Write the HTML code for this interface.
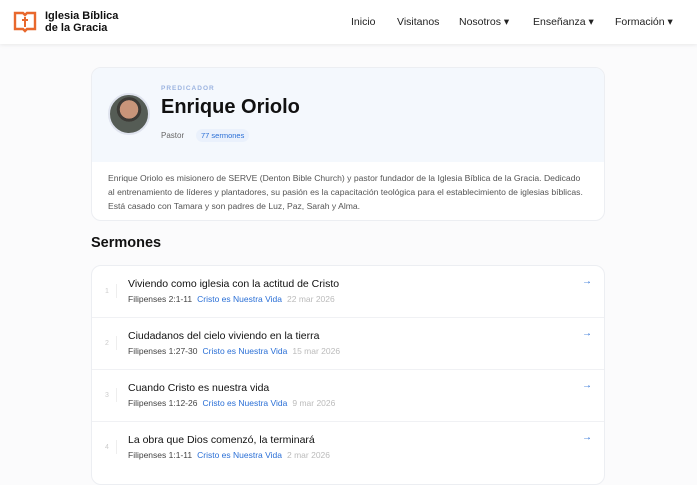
<!DOCTYPE html><html><head><meta charset="utf-8"><style>
*{margin:0;padding:0;box-sizing:border-box}
body{width:697px;height:469px;overflow:hidden;background:#fbfbfc;font-family:"Liberation Sans",sans-serif;color:#111;position:relative}
.hdr{position:absolute;left:0;top:0;width:697px;height:44px;background:#fff;box-shadow:0 1px 4px rgba(0,0,0,.08)}
.logo{position:absolute;left:45px;top:11px;font-size:11px;font-weight:bold;line-height:11.5px}
.nav{position:absolute;top:16px;font-size:10.5px;color:#222}
.card{position:absolute;left:91px;top:67px;width:514px;height:154px;background:#fff;border:1px solid #eceef2;border-radius:10px;overflow:hidden}
.top{height:94px;background:#f4f8fd}
.lst{position:absolute;left:91px;top:265px;width:514px;height:220px;background:#fff;border:1px solid #eceef2;border-radius:10px}
.row{position:absolute;left:0;width:512px;height:52px;border-bottom:1px solid #f0f1f4}
.n{position:absolute;left:13px;top:22px;font-size:7px;color:#ccc}
.bar{position:absolute;left:24px;top:18px;width:1px;height:14px;background:#eee}
.t{position:absolute;left:36px;top:12px;font-size:10.5px;color:#111}
.m{position:absolute;left:36px;top:28px;font-size:8.5px;color:#444;white-space:nowrap}
.m b{font-weight:normal;color:#2a6fd6;margin:0 5px}
.m i{font-style:normal;color:#bbb}
.ar{position:absolute;right:12px;top:10px;font-size:10px;color:#2a6fd6}
</style></head><body>
<div class="hdr">
<svg style="position:absolute;left:13px;top:10px" width="24" height="24" viewBox="0 0 24 24"><path d="M2 3h8l2 2 2-2h8v16h-8l-2 2-2-2H2z" fill="none" stroke="#e8682d" stroke-width="2.4"/><path d="M12 7v10M9 10h6" stroke="#e8682d" stroke-width="2"/></svg>
<div class="logo">Iglesia Bíblica<br>de la Gracia</div>
<div class="nav" style="left:351px">Inicio</div>
<div class="nav" style="left:397px">Visitanos</div>
<div class="nav" style="left:459px">Nosotros ▾</div>
<div class="nav" style="left:533px">Enseñanza ▾</div>
<div class="nav" style="left:615px">Formación ▾</div>
</div>
<div class="card"><div class="top"></div>
<div style="position:absolute;left:16px;top:25px;width:42px;height:42px;border-radius:50%;background:radial-gradient(circle at 50% 38%,#c9957a 0 30%,#3c3a36 31% 40%,#555c55 41% 100%);border:2px solid #dfe3ee"></div>
<div style="position:absolute;left:69px;top:17px;font-size:6.5px;color:#9bb3e0;letter-spacing:1px;font-weight:bold">PREDICADOR</div>
<div style="position:absolute;left:69px;top:28px;font-size:20px;font-weight:bold">Enrique Oriolo</div>
<div style="position:absolute;left:69px;top:63px;font-size:8px;color:#666">Pastor</div>
<div style="position:absolute;left:104px;top:61px;font-size:7.5px;color:#2a6fd6;background:#eaf1fc;padding:2px 5px;border-radius:8px">77 sermones</div>
<div style="position:absolute;left:16px;top:103px;width:480px;font-size:8.6px;color:#555;line-height:14px">Enrique Oriolo es misionero de SERVE (Denton Bible Church) y pastor fundador de la Iglesia Bíblica de la Gracia. Dedicado al entrenamiento de líderes y plantadores, su pasión es la capacitación teológica para el establecimiento de iglesias bíblicas. Está casado con Tamara y son padres de Luz, Paz, Sarah y Alma.</div>
</div>
<div style="position:absolute;left:91px;top:235px;font-size:14.5px;font-weight:bold">Sermones</div>
<div class="lst">
<div class="row" style="top:0"><span class="n">1</span><span class="bar"></span><div class="t">Viviendo como iglesia con la actitud de Cristo</div><div class="m">Filipenses 2:1-11<b>Cristo es Nuestra Vida</b><i>22 mar 2026</i></div><span class="ar">→</span></div>
<div class="row" style="top:52px"><span class="n">2</span><span class="bar"></span><div class="t">Ciudadanos del cielo viviendo en la tierra</div><div class="m">Filipenses 1:27-30<b>Cristo es Nuestra Vida</b><i>15 mar 2026</i></div><span class="ar">→</span></div>
<div class="row" style="top:104px"><span class="n">3</span><span class="bar"></span><div class="t">Cuando Cristo es nuestra vida</div><div class="m">Filipenses 1:12-26<b>Cristo es Nuestra Vida</b><i>9 mar 2026</i></div><span class="ar">→</span></div>
<div class="row" style="top:156px;border:0"><span class="n">4</span><span class="bar"></span><div class="t">La obra que Dios comenzó, la terminará</div><div class="m">Filipenses 1:1-11<b>Cristo es Nuestra Vida</b><i>2 mar 2026</i></div><span class="ar">→</span></div>
</div>
</body></html>
